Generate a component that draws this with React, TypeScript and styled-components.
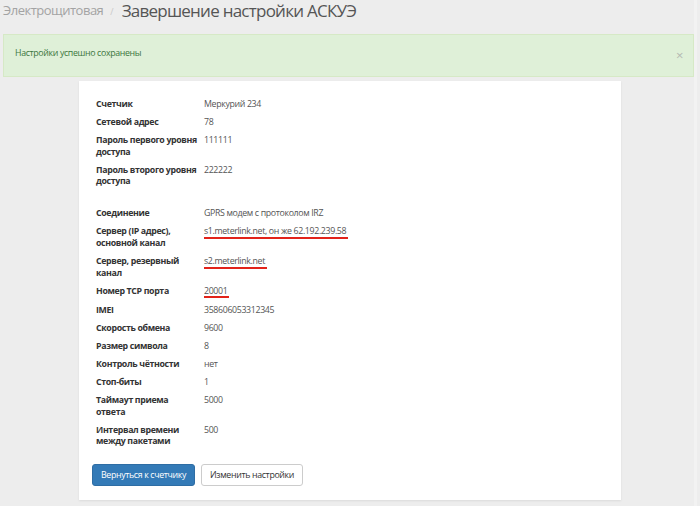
import React from "react";
import styled, { createGlobalStyle } from "styled-components";

const GlobalStyle = createGlobalStyle`
  html, body {
    margin: 0;
    padding: 0;
    background: #ededed;
  }
  body {
    font-family: "Open Sans", "Noto Sans", sans-serif;
    color: #333;
  }
`;

const Page = styled.div`
  width: 697px;
  height: 506px;
  padding: 1px 0 0 3px;
  box-sizing: border-box;
  border-right: 3px solid #f2f2f2;
  overflow: hidden;
`;

const Header = styled.div`
  display: flex;
  align-items: flex-start;
  height: 20px;
  line-height: 20px;
  .crumb {
    font-size: 13px;
    letter-spacing: -0.5px;
    color: #a3a3a3;
    margin-top: -1px;
  }
  .sep {
    font-size: 9px;
    color: #c8c8c8;
    margin: 1px 8px 0 7px;
  }
  h1 {
    margin: 0;
    font-size: 17px;
    line-height: 20px;
    letter-spacing: -0.75px;
    font-weight: 400;
    color: #555;
  }
`;

const Alert = styled.div`
  display: flex;
  align-items: center;
  justify-content: space-between;
  margin-top: 13px;
  height: 43px;
  box-sizing: border-box;
  padding: 0 10px 5px 11px;
  background: #dff0d8;
  border: 1px solid #d6e9c6;
  color: #3c763d;
  font-size: 8.8px;
  letter-spacing: -0.35px;
  .close {
    font-size: 13px;
    color: #b4b8b2;
    line-height: 1;
    margin-top: 4px;
  }
`;

const Card = styled.div`
  width: 542px;
  margin: 4px 0 0 76px;
  box-sizing: border-box;
  padding: 18px 17px 14px 13px;
  background: #fff;
  box-shadow: 0 1px 2px rgba(0, 0, 0, 0.08);
`;

const Rows = styled.div`
  padding-left: 4px;
`;

const Row = styled.div<{ $gapTop?: boolean }>`
  display: grid;
  grid-template-columns: 108px 1fr;
  font-size: 8.8px;
  letter-spacing: -0.35px;
  line-height: 11.5px;
  margin-bottom: 6.6px;
  padding-top: ${(p) => (p.$gapTop ? "14px" : "0")};
`;

const Label = styled.div`
  font-weight: 700;
  color: #333;
  padding-right: 6px;
`;

const Value = styled.div`
  color: #555;
`;

const Marked = styled.span`
  display: inline-block;
  border-bottom: 2px solid #e2231a;
  line-height: 10.5px;
  padding: 0 2px 0 0;
`;

const Buttons = styled.div`
  display: flex;
  gap: 6px;
  margin-top: 16px;
`;

const Button = styled.button<{ $primary?: boolean }>`
  height: 22px;
  padding: 0 8px;
  font-family: "Open Sans", "Noto Sans", sans-serif;
  font-size: 8.8px;
  letter-spacing: -0.35px;
  border-radius: 3px;
  border: 1px solid ${(p) => (p.$primary ? "#2e6da4" : "#ccc")};
  background: ${(p) => (p.$primary ? "#337ab7" : "#fff")};
  color: ${(p) => (p.$primary ? "#fff" : "#333")};
`;

type Item = { label: string; value: React.ReactNode; gapTop?: boolean };

const items: Item[] = [
  { label: "Счетчик", value: "Меркурий 234" },
  { label: "Сетевой адрес", value: "78" },
  { label: "Пароль первого уровня доступа", value: "111111" },
  { label: "Пароль второго уровня доступа", value: "222222" },
  { label: "Соединение", value: "GPRS модем с протоколом IRZ", gapTop: true },
  {
    label: "Сервер (IP адрес), основной канал",
    value: <Marked>s1.meterlink.net, он же 62.192.239.58</Marked>,
  },
  { label: "Сервер, резервный канал", value: <Marked>s2.meterlink.net</Marked> },
  { label: "Номер TCP порта", value: <Marked>20001</Marked> },
  { label: "IMEI", value: "358606053312345" },
  { label: "Скорость обмена", value: "9600" },
  { label: "Размер символа", value: "8" },
  { label: "Контроль чётности", value: "нет" },
  { label: "Стоп-биты", value: "1" },
  { label: "Таймаут приема ответа", value: "5000" },
  { label: "Интервал времени между пакетами", value: "500" },
];

export default function App() {
  return (
    <>
      <GlobalStyle />
      <Page>
        <Header>
          <span className="crumb">Электрощитовая</span>
          <span className="sep">/</span>
          <h1>Завершение настройки АСКУЭ</h1>
        </Header>
        <Alert>
          <span>Настройки успешно сохранены</span>
          <span className="close">×</span>
        </Alert>
        <Card>
          <Rows>
            {items.map((it) => (
              <Row key={it.label} $gapTop={it.gapTop}>
                <Label>{it.label}</Label>
                <Value>{it.value}</Value>
              </Row>
            ))}
          </Rows>
          <Buttons>
            <Button $primary>Вернуться к счетчику</Button>
            <Button>Изменить настройки</Button>
          </Buttons>
        </Card>
      </Page>
    </>
  );
}
